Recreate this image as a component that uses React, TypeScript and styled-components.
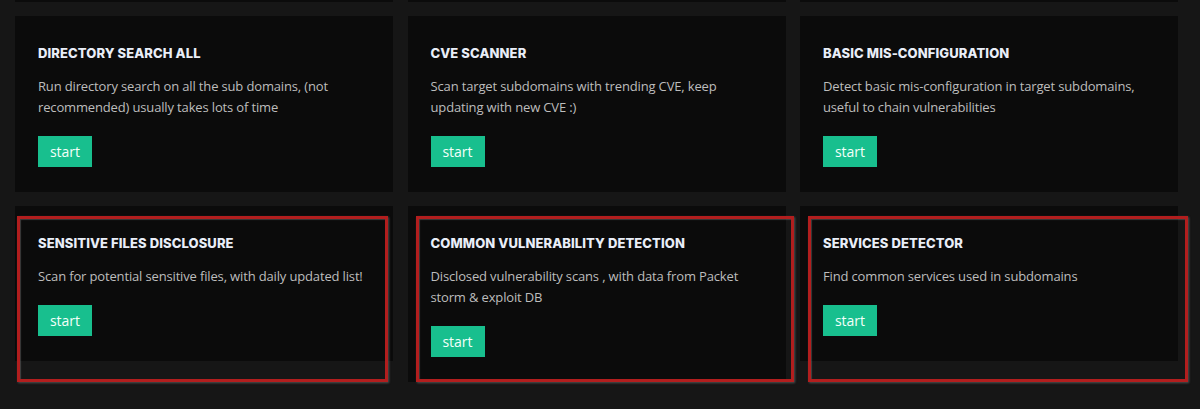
import React from 'react'
import styled, { createGlobalStyle } from 'styled-components'

interface ITool {
  title: string
  description: string
}

interface IMark {
  left: number
  right: number
}

const GlobalStyle = createGlobalStyle`
  html, body {
    margin: 0;
    padding: 0;
    background: #161616;
    height: 100%;
  }
  body {
    font-family: 'Open Sans', 'Liberation Sans', sans-serif;
    overflow: hidden;
  }
`

const SPage = styled.div`
  width: 1200px;
  height: 409px;
  background: #161616;
  overflow: hidden;
`

const SGrid = styled.div`
  display: grid;
  grid-template-columns: repeat(3, 378px);
  column-gap: 14.5px;
  row-gap: 14px;
  padding: 0 20px 0 15px;
  align-items: start;
`

const STail = styled.div`
  height: 2px;
  background: #0b0b0b;
`

const SCell = styled.div`
  position: relative;
`

const SCard = styled.div`
  background: #0b0b0b;
  padding: 29px 20px 25px 23px;
`

const STitle = styled.h3`
  margin: 0;
  font-family: 'Inter', 'Open Sans', sans-serif;
  font-size: 13px;
  font-weight: 800;
  line-height: 16px;
  color: #e9eef8;
  letter-spacing: 0.1px;
`

const SDescription = styled.p`
  margin: 15px 0 0 0;
  font-size: 13px;
  line-height: 21px;
  letter-spacing: -0.15px;
  color: #bdbdbd;
`

const SStartButton = styled.button`
  margin-top: 18px;
  width: 54px;
  height: 31px;
  border: none;
  border-radius: 0;
  background: #18bf8e;
  color: #f4fffa;
  font-family: 'Open Sans', sans-serif;
  font-size: 14px;
  padding: 0;
  cursor: pointer;
  display: block;
`

const SMark = styled.div<{ $left: number; $right: number }>`
  position: absolute;
  top: 10px;
  left: ${(p) => p.$left}px;
  right: ${(p) => p.$right}px;
  height: 166px;
  border: 3px solid #b21e1e;
  box-sizing: border-box;
  box-shadow: 1px 1px 2px rgba(130, 130, 130, 0.55), inset 1px 1px 1px rgba(120, 120, 120, 0.45);
  pointer-events: none;
`

const tools: ITool[] = [
  {
    title: 'DIRECTORY SEARCH ALL',
    description: 'Run directory search on all the sub domains, (not recommended) usually takes lots of time',
  },
  {
    title: 'CVE SCANNER',
    description: 'Scan target subdomains with trending CVE, keep updating with new CVE :)',
  },
  {
    title: 'BASIC MIS-CONFIGURATION',
    description: 'Detect basic mis-configuration in target subdomains, useful to chain vulnerabilities',
  },
  {
    title: 'SENSITIVE FILES DISCLOSURE',
    description: 'Scan for potential sensitive files, with daily updated list!',
  },
  {
    title: 'COMMON VULNERABILITY DETECTION',
    description: 'Disclosed vulnerability scans , with data from Packet storm & exploit DB',
  },
  {
    title: 'SERVICES DETECTOR',
    description: 'Find common services used in subdomains',
  },
]

// red highlight boxes drawn over the second row
const marks: IMark[] = [
  { left: 2, right: 5 },
  { left: 8, right: -8 },
  { left: 8, right: -10 },
]

const ToolCard = (props: { tool: ITool; mark?: IMark }) => {
  const { tool, mark } = props
  return (
    <SCell>
      <SCard>
        <STitle>{tool.title}</STitle>
        <SDescription>{tool.description}</SDescription>
        <SStartButton>start</SStartButton>
      </SCard>
      {mark && <SMark $left={mark.left} $right={mark.right} />}
    </SCell>
  )
}

const App = () => {
  return (
    <SPage>
      <GlobalStyle />
      <SGrid>
        <STail />
        <STail />
        <STail />
        {tools.map((tool, i) => (
          <ToolCard key={tool.title} tool={tool} mark={i >= 3 ? marks[i - 3] : undefined} />
        ))}
      </SGrid>
    </SPage>
  )
}

export default App
